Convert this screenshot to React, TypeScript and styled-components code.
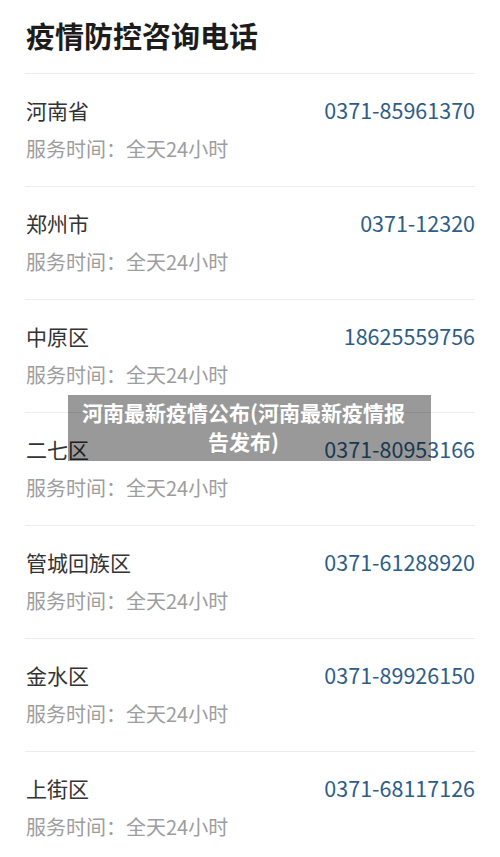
import React from "react";
import styled, { createGlobalStyle } from "styled-components";

const GlobalStyle = createGlobalStyle`
  html, body { margin: 0; padding: 0; background: #ffffff; }
  body { font-family: "Noto Sans CJK SC", "Noto Sans", sans-serif; }
`;

const Page = styled.div`
  position: relative;
  width: 500px;
  height: 857px;
  overflow: hidden;
  background: #ffffff;
  box-sizing: border-box;
  padding: 0 25px 0 25px;
`;

const Header = styled.h1`
  margin: 0;
  padding: 15px 0 18px 1px;
  font-size: 29px;
  line-height: 40px;
  font-weight: 700;
  color: #1c1c1c;
`;

const List = styled.div`
  display: flex;
  flex-direction: column;
`;

const Row = styled.div`
  border-top: 1px solid #ececec;
  padding: 21px 0 22px 1px;
  display: flex;
  flex-direction: column;
  gap: 9px;
`;

const TopLine = styled.div`
  display: flex;
  justify-content: space-between;
  align-items: center;
  height: 30px;
`;

const Name = styled.span`
  font-size: 21px;
  line-height: 30px;
  color: #333333;
`;

const Phone = styled.span`
  font-size: 21.5px;
  line-height: 30px;
  color: #2c5d88;
`;

const Sub = styled.div`
  font-size: 20px;
  line-height: 30px;
  color: #9d9d9d;
`;

const Overlay = styled.div`
  position: absolute;
  left: 68px;
  top: 395px;
  width: 363px;
  height: 66px;
  box-sizing: border-box;
  padding: 3px 14px 5px 2px;
  background: rgba(0, 0, 0, 0.4);
  color: #ffffff;
  font-size: 21px;
  line-height: 29px;
  font-weight: 700;
  text-align: center;
`;

const items = [
  { name: "河南省", phone: "0371-85961370" },
  { name: "郑州市", phone: "0371-12320" },
  { name: "中原区", phone: "18625559756" },
  { name: "二七区", phone: "0371-80953166" },
  { name: "管城回族区", phone: "0371-61288920" },
  { name: "金水区", phone: "0371-89926150" },
  { name: "上街区", phone: "0371-68117126" },
];

export default function App() {
  return (
    <>
      <GlobalStyle />
      <Page>
        <Header>疫情防控咨询电话</Header>
        <List>
          {items.map((it) => (
            <Row key={it.name}>
              <TopLine>
                <Name>{it.name}</Name>
                <Phone>{it.phone}</Phone>
              </TopLine>
              <Sub>服务时间：全天24小时</Sub>
            </Row>
          ))}
        </List>
        <Overlay>
          河南最新疫情公布(河南最新疫情报
          <br />
          告发布)
        </Overlay>
      </Page>
    </>
  );
}
